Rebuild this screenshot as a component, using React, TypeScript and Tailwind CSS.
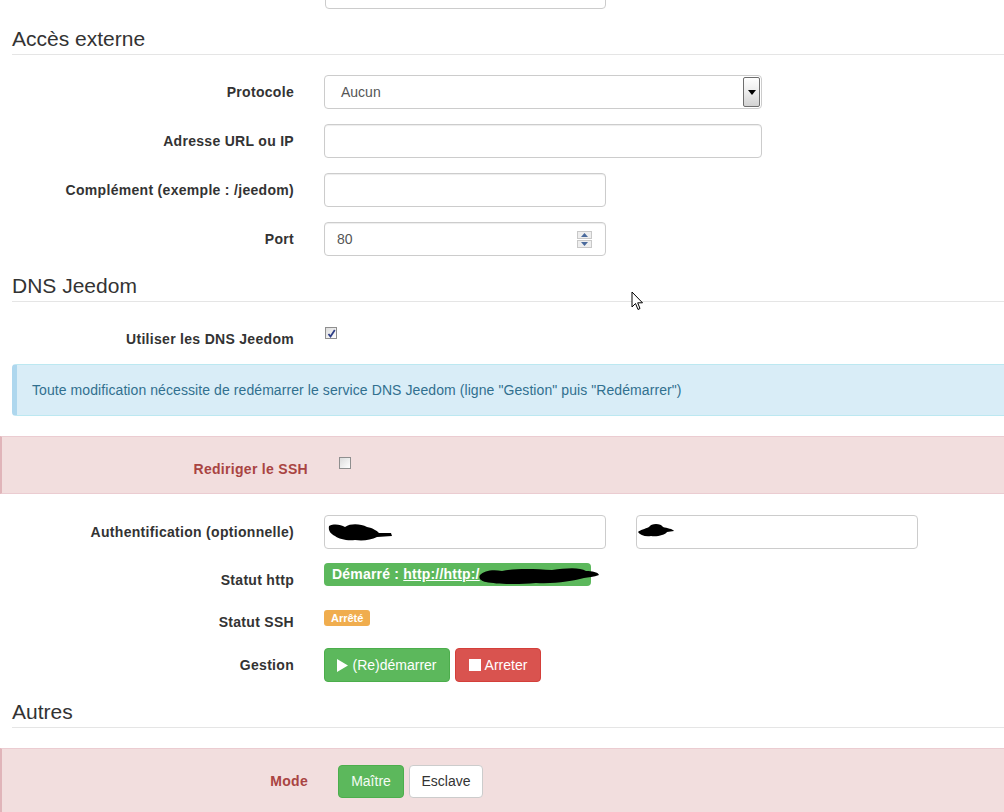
import React from "react";

function Label({ children, red = false, wide = false }: { children: React.ReactNode; red?: boolean; wide?: boolean }) {
  return (
    <div
      className={`${wide ? "w-[306px]" : "w-[294px]"} shrink-0 text-right pt-[7px] leading-[20px] text-[14px] font-bold tracking-[0.3px] ${red ? "text-[#a94442]" : "text-[#333333]"}`}
    >
      {children}
    </div>
  );
}

function Input({ w = "half", children }: { w?: "half" | "full"; children?: React.ReactNode }) {
  return (
    <div
      className={`${w === "full" ? "w-[438px]" : "w-[282px]"} relative h-[34px] shrink-0 rounded-[4px] border border-[#cccccc] bg-white px-3 text-[14px] leading-[32px] text-[#555555] shadow-[inset_0_1px_1px_rgba(0,0,0,0.075)]`}
    >
      {children}
    </div>
  );
}

function Legend({ children }: { children: React.ReactNode }) {
  return (
    <div className="ml-3 mb-[20px] h-[31px] border-b border-[#e5e5e5] text-[21px] leading-[30px] text-[#333333]">
      {children}
    </div>
  );
}

function Checkbox({ checked }: { checked: boolean }) {
  return (
    <div className="mt-[5px] flex h-[12px] w-[12px] items-center justify-center border border-[#8f8f8f] bg-gradient-to-br from-[#dcdcdc] to-[#ffffff]">
      {checked && (
        <svg width="9" height="9" viewBox="0 0 9 9">
          <path d="M1.5 5 L3.5 7.5 L7.8 1" fill="none" stroke="#2f3f87" strokeWidth="1.8" />
        </svg>
      )}
    </div>
  );
}

function Blob({ d, w, h }: { d: string; w: number; h: number }) {
  return (
    <svg width={w} height={h} viewBox={`0 0 ${w} ${h}`}>
      <path d={d} fill="#000" />
    </svg>
  );
}

export default function App() {
  return (
    <div className="relative h-[812px] w-[1004px] overflow-hidden bg-white font-['Liberation_Sans',Arial,sans-serif] text-[14px] text-[#333333]">
      <div className="w-[1020px]">
        {/* top partial input */}
        <div className="ml-[325px] mt-[-25px] mb-[15px] h-[34px] w-[281px] rounded-[4px] border border-[#cccccc] bg-white" />

        <Legend>Accès externe</Legend>

        <div className="mb-[15px] flex gap-[30px]">
          <Label>Protocole</Label>
          <div className="relative h-[34px] w-[438px] shrink-0 rounded-[4px] border border-[#cccccc] bg-white pl-[16px] text-[14px] leading-[32px] text-[#555555]">
            Aucun
            <div className="absolute right-[1px] top-[1px] bottom-[1px] flex w-[17px] items-center justify-center rounded-[2px] border border-[#6e6e6e] bg-gradient-to-b from-[#ffffff] via-[#ececec] to-[#d2d2d2]">
              <svg width="8" height="5" viewBox="0 0 8 5">
                <path d="M0 0 L8 0 L4 5 Z" fill="#000" />
              </svg>
            </div>
          </div>
        </div>

        <div className="mb-[15px] flex gap-[30px]">
          <Label>Adresse URL ou IP</Label>
          <Input w="full" />
        </div>

        <div className="mb-[15px] flex gap-[30px]">
          <Label>Complément (exemple : /jeedom)</Label>
          <Input />
        </div>

        <div className="mb-[15px] flex gap-[30px]">
          <Label>Port</Label>
          <Input>
            80
            <div className="absolute right-[13px] top-[8px] flex w-[15px] flex-col gap-[1px]">
              <div className="flex h-[8px] items-center justify-center border border-[#c8c8c8] bg-[#eeeeee]">
                <svg width="7" height="4" viewBox="0 0 7 4">
                  <path d="M0 4 L7 4 L3.5 0 Z" fill="#4a6a9c" />
                </svg>
              </div>
              <div className="flex h-[8px] items-center justify-center border border-[#c8c8c8] bg-[#eeeeee]">
                <svg width="7" height="4" viewBox="0 0 7 4">
                  <path d="M0 0 L7 0 L3.5 4 Z" fill="#4a6a9c" />
                </svg>
              </div>
            </div>
          </Input>
        </div>

        <Legend>DNS Jeedom</Legend>

        <div className="mb-[15px] flex h-[27px] gap-[31px]">
          <Label>Utiliser les DNS Jeedom</Label>
          <Checkbox checked />
        </div>

        <div className="ml-3 mb-[20px] h-[52px] rounded-[4px] border border-[#bce8f1] border-l-[5px] border-l-[#aed7ee] bg-[#d9edf7] px-[15px] py-[15px] text-[14px] leading-[20px] tracking-[0.08px] text-[#31708f]">
          Toute modification nécessite de redémarrer le service DNS Jeedom (ligne "Gestion" puis "Redémarrer")
        </div>

        <div className="mb-[21px] h-[58px] border-y border-[#ebccd1] border-l-2 border-l-[#e0b4b9] bg-[#f2dede] py-[15px]">
          <div className="flex gap-[31px]">
            <Label red wide>
              Rediriger le SSH
            </Label>
            <Checkbox checked={false} />
          </div>
        </div>

        <div className="mb-[15px] flex gap-[30px]">
          <Label>Authentification (optionnelle)</Label>
          <div className="flex gap-[30px]">
            <div className="relative h-[34px] w-[282px] rounded-[4px] border border-[#cccccc] bg-white">
              <div className="absolute left-[2px] top-[6px]">
                <Blob
                  w={66}
                  h={20}
                  d="M2 4 C8 1 14 3 18 5 C24 1 34 2 40 5 C46 6 50 9 52 11 L64 11 L65 14 L50 15 C44 18 36 19 28 18 C20 19 12 17 8 14 C4 12 1 9 2 4 Z"
                />
              </div>
            </div>
            <div className="relative h-[34px] w-[282px] rounded-[4px] border border-[#cccccc] bg-white">
              <div className="absolute left-[0px] top-[6px]">
                <Blob
                  w={38}
                  h={18}
                  d="M12 5 C14 1 24 1 26 5 C30 6 36 7 37 9 L30 10 C28 13 20 15 14 14 C8 15 3 13 1 10 C3 8 8 7 12 5 Z"
                />
              </div>
            </div>
          </div>
        </div>

        <div className="mb-[15px] mt-[-1px] flex h-[27px] gap-[30px]">
          <Label>Statut http</Label>
          <div className="relative">
            <div className="flex h-[23px] w-[267px] items-center rounded-[4px] bg-[#5cb85c] pl-[8px] text-[14px] font-bold tracking-[0.2px] text-white">
              Démarré :&nbsp;<span className="underline">http://http:/</span>
            </div>
            <div className="absolute left-[152px] top-[2px]">
              <Blob
                w={124}
                h={22}
                d="M4 10 C8 6 16 4 26 6 C40 3 60 4 76 5 C90 3 104 2 110 6 C116 6 122 7 123 10 C118 12 112 12 108 13 C96 16 80 19 60 18 C40 20 20 19 10 17 C5 16 2 13 4 10 Z"
              />
            </div>
          </div>
        </div>

        <div className="mb-[16px] flex h-[27px] gap-[30px]">
          <Label>Statut SSH</Label>
          <div className="mt-[5px] flex h-[16px] items-center rounded-[3px] bg-[#f0ad4e] px-[7px] text-[11px] font-bold leading-[16px] text-white">
            Arrêté
          </div>
        </div>

        <div className="mb-[15px] flex gap-[30px]">
          <Label>Gestion</Label>
          <div className="flex gap-[5px]">
            <div className="flex h-[34px] w-[126px] items-center justify-center gap-[4px] rounded-[4px] border border-[#4cae4c] bg-[#5cb85c] text-[14px] text-white">
              <svg width="11" height="13" viewBox="0 0 11 13">
                <path d="M0 0 L11 6.5 L0 13 Z" fill="#fff" />
              </svg>
              (Re)démarrer
            </div>
            <div className="flex h-[34px] w-[86px] items-center justify-center gap-[4px] rounded-[4px] border border-[#d43f3a] bg-[#d9534f] text-[14px] text-white">
              <div className="h-[12px] w-[12px] bg-white" />
              Arreter
            </div>
          </div>
        </div>

        <Legend>Autres</Legend>

        <div className="h-[80px] border-y border-[#ebccd1] border-l-2 border-l-[#e0b4b9] bg-[#f2dede] pt-[15px]">
          <div className="flex gap-[30px]">
            <Label red wide>
              Mode
            </Label>
            <div className="mt-[1px] flex gap-[5px]">
              <div className="flex h-[33px] w-[66px] items-center justify-center rounded-[4px] border border-[#4cae4c] bg-[#5cb85c] text-[14px] text-[#f4fbf4]">
                Maître
              </div>
              <div className="flex h-[33px] w-[74px] items-center justify-center rounded-[4px] border border-[#cccccc] bg-white text-[14px] text-[#333333]">
                Esclave
              </div>
            </div>
          </div>
        </div>
      </div>

      {/* mouse cursor */}
      <div className="absolute left-[631px] top-[291px]">
        <svg width="13" height="20" viewBox="0 0 13 20">
          <path d="M1 1 L1 16 L4.5 12.5 L7 18.5 L9 17.5 L6.7 11.8 L11.5 11.8 Z" fill="#fff" stroke="#000" strokeWidth="1" strokeLinejoin="round" />
        </svg>
      </div>
    </div>
  );
}
